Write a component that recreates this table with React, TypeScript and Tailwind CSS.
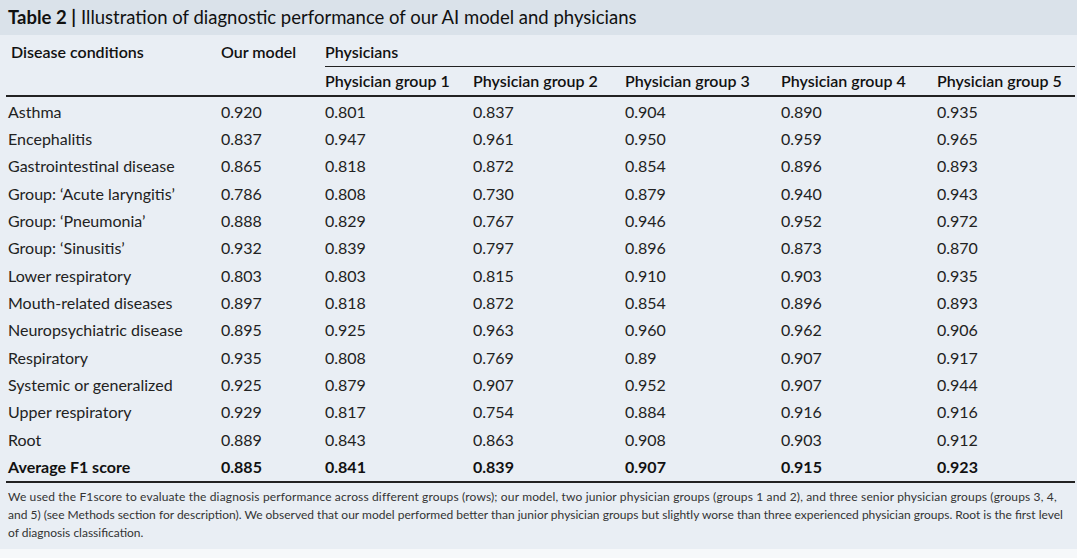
import React from "react";

const rows: [string, string, string, string, string, string, string][] = [
  ["Asthma", "0.920", "0.801", "0.837", "0.904", "0.890", "0.935"],
  ["Encephalitis", "0.837", "0.947", "0.961", "0.950", "0.959", "0.965"],
  ["Gastrointestinal disease", "0.865", "0.818", "0.872", "0.854", "0.896", "0.893"],
  ["Group: \u2018Acute laryngitis\u2019", "0.786", "0.808", "0.730", "0.879", "0.940", "0.943"],
  ["Group: \u2018Pneumonia\u2019", "0.888", "0.829", "0.767", "0.946", "0.952", "0.972"],
  ["Group: \u2018Sinusitis\u2019", "0.932", "0.839", "0.797", "0.896", "0.873", "0.870"],
  ["Lower respiratory", "0.803", "0.803", "0.815", "0.910", "0.903", "0.935"],
  ["Mouth-related diseases", "0.897", "0.818", "0.872", "0.854", "0.896", "0.893"],
  ["Neuropsychiatric disease", "0.895", "0.925", "0.963", "0.960", "0.962", "0.906"],
  ["Respiratory", "0.935", "0.808", "0.769", "0.89", "0.907", "0.917"],
  ["Systemic or generalized", "0.925", "0.879", "0.907", "0.952", "0.907", "0.944"],
  ["Upper respiratory", "0.929", "0.817", "0.754", "0.884", "0.916", "0.916"],
  ["Root", "0.889", "0.843", "0.863", "0.908", "0.903", "0.912"],
];

const avg = ["Average F1 score", "0.885", "0.841", "0.839", "0.907", "0.915", "0.923"];

const cols = "grid grid-cols-[215px_104px_148px_152px_156px_156px_1fr]";

export default function App() {
  return (
    <div
      className="w-[1077px] h-[558px] bg-[#f6f8fa] text-[#1a1a1a] overflow-hidden"
      style={{ fontFamily: "Lato, 'Open Sans', sans-serif" }}
    >
      <div className="h-[549px] bg-[#e9eef4] flex flex-col">
        <div className="h-[35px] bg-[#dae2ea] flex items-center pl-[8px] text-[18.5px] text-[#111]">
          <span className="font-bold">Table 2 |</span>
          <span className="ml-[5px]">Illustration of diagnostic performance of our AI model and physicians</span>
        </div>
        <div className="pl-[6px] pr-[2px]">
          <div className={`${cols} text-[16px] font-semibold text-[#111]`}>
            <div className="pl-[5px] pt-[5px] h-[32px]">Disease conditions</div>
            <div className="pt-[5px]">Our model</div>
            <div className="col-span-5 pt-[5px] border-b border-[#222] h-[32px]">
              <span>Physicians</span>
            </div>
          </div>
          <div className={`${cols} text-[16px] font-semibold text-[#111] border-b-2 border-[#222] h-[30px] items-center`}>
            <div></div>
            <div></div>
            <div>Physician group 1</div>
            <div>Physician group 2</div>
            <div>Physician group 3</div>
            <div>Physician group 4</div>
            <div>Physician group 5</div>
          </div>
          <div className="pt-[1px]">
            {rows.map((r) => (
              <div key={r[0]} className={`${cols} h-[27.35px] items-center text-[16px] text-[#222]`}>
                {r.map((c, i) => (
                  <div key={i} className={i === 0 ? "pl-[2px]" : ""}>
                    {c}
                  </div>
                ))}
              </div>
            ))}
            <div className={`${cols} h-[30px] items-center text-[16px] font-bold text-[#111] border-b-2 border-[#222]`}>
              {avg.map((c, i) => (
                <div key={i} className={i === 0 ? "pl-[2px]" : ""}>
                  {c}
                </div>
              ))}
            </div>
          </div>
          <div className="pl-[2px] pt-[5px] whitespace-nowrap text-[12px] leading-[18px] text-[#333]">
            <div className="tracking-[0.15px]">
              We used the F1score to evaluate the diagnosis performance across different groups (rows); our model, two junior physician groups (groups 1 and 2), and three senior physician groups (groups 3, 4,
            </div>
            <div>
              and 5) (see Methods section for description). We observed that our model performed better than junior physician groups but slightly worse than three experienced physician groups. Root is the first level
            </div>
            <div>of diagnosis classification.</div>
          </div>
        </div>
      </div>
    </div>
  );
}
